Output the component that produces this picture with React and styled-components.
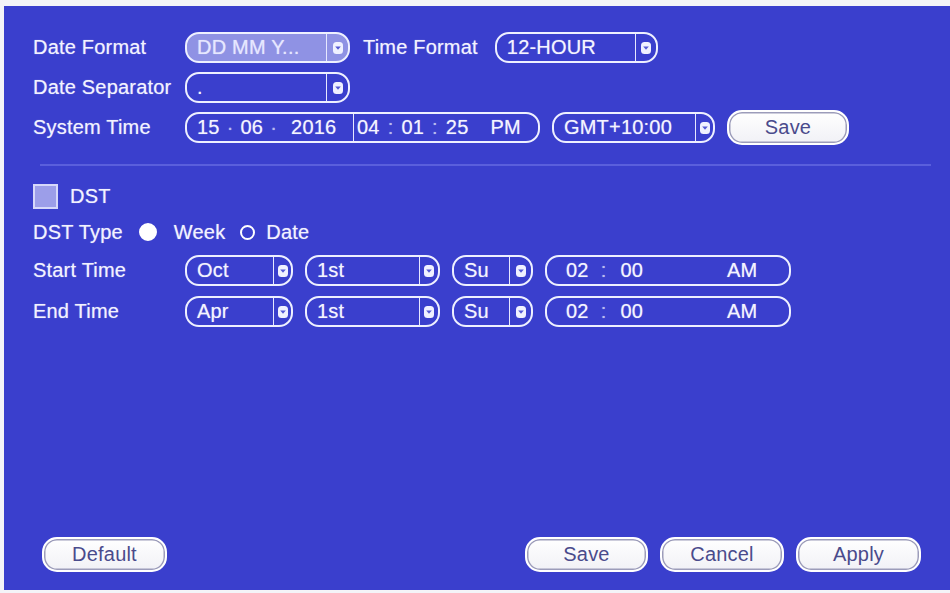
import React from "react";
import styled, { createGlobalStyle } from "styled-components";

const GlobalStyle = createGlobalStyle`
  html, body {
    margin: 0;
    padding: 0;
    background: #f4f4f8;
  }
  body {
    font-family: "Liberation Sans", Arial, sans-serif;
  }
`;

const Frame = styled.div`
  padding: 6px 0 3px 4px;
`;

const Panel = styled.div`
  height: 584px;
  box-sizing: border-box;
  background: #3a3fcd;
  padding: 26px 20px 18px 29px;
  display: flex;
  flex-direction: column;
  color: #f2f2ff;
  font-size: 20px;
  letter-spacing: 0.2px;
  text-shadow: 0 0 1px rgba(255, 255, 255, 0.55);
`;

const Row = styled.div`
  display: flex;
  align-items: center;
  height: ${({ $h }) => $h || 31}px;
  margin-bottom: ${({ $mb }) => $mb ?? 9}px;
  gap: ${({ $gap }) => $gap ?? 12}px;
`;

const Label = styled.span`
  width: 140px;
  flex-shrink: 0;
  white-space: nowrap;
`;

const InlineLabel = styled.span`
  white-space: nowrap;
  margin: 0 ${({ $mr }) => $mr ?? 0}px 0 ${({ $ml }) => $ml ?? 0}px;
`;

const Pill = styled.div`
  box-sizing: border-box;
  width: ${({ $w }) => $w}px;
  height: 31px;
  border: 2px solid #eef0ff;
  border-radius: 14px;
  display: flex;
  align-items: center;
  flex-shrink: 0;
  background: ${({ $active }) => ($active ? "#8f92e4" : "transparent")};
  color: ${({ $active }) => ($active ? "#e6e7ff" : "#f4f4ff")};
  overflow: hidden;
`;

const Value = styled.span`
  flex: 1;
  padding-left: 10px;
  white-space: nowrap;
`;

const ArrowCell = styled.span`
  width: ${({ $w }) => $w || 20}px;
  height: 100%;
  box-sizing: border-box;
  border-left: 1.5px solid #e6e8ff;
  display: flex;
  align-items: center;
  justify-content: center;
`;

const Segment = styled.span`
  display: flex;
  align-items: center;
  height: 100%;
  box-sizing: border-box;
  padding-left: ${({ $pl }) => $pl ?? 10}px;
  width: ${({ $w }) => ($w ? `${$w}px` : "auto")};
  flex: ${({ $w }) => ($w ? "none" : 1)};
  border-right: ${({ $divider }) => ($divider ? "1.5px solid #e6e8ff" : "none")};
`;

const Part = styled.span`
  margin-right: ${({ $mr }) => $mr ?? 0}px;
  color: ${({ $dim }) => ($dim ? "#b8bbf0" : "inherit")};
`;

const Button = styled.button`
  box-sizing: border-box;
  width: ${({ $w }) => $w || 124}px;
  height: 35px;
  border: 2px solid #ffffff;
  border-radius: 15px;
  background: linear-gradient(#ffffff, #f1f1f6);
  box-shadow: inset 0 0 0 1.5px #9c9cba;
  color: #4a4b8c;
  font-family: "Liberation Sans", Arial, sans-serif;
  font-size: 20px;
  letter-spacing: 0.2px;
  padding: 0;
  flex-shrink: 0;
`;

const Divider = styled.div`
  height: 2px;
  background: #5a5fdc;
  margin: 21px 0 17px 7px;
  width: 891px;
`;

const Check = styled.span`
  box-sizing: border-box;
  width: 25px;
  height: 25px;
  background: #9c9ee9;
  border: 2px solid #d6d8fa;
  margin-right: 12px;
`;

const Radio = styled.span`
  box-sizing: border-box;
  width: ${({ $on }) => ($on ? 18 : 15)}px;
  height: ${({ $on }) => ($on ? 18 : 15)}px;
  border-radius: 50%;
  border: 2px solid #ffffff;
  background: ${({ $on }) => ($on ? "#ffffff" : "transparent")};
  margin: 0 ${({ $mr }) => $mr}px 0 ${({ $ml }) => $ml}px;
`;

const Footer = styled.div`
  margin-top: auto;
  display: flex;
  align-items: center;
  padding-left: 9px;
`;

const FooterRight = styled.div`
  margin-left: auto;
  display: flex;
  gap: 12px;
  margin-right: 9px;
`;

function Arrow() {
  return (
    <svg width="10" height="12" viewBox="0 0 10 12">
      <rect x="0" y="0" width="10" height="12" rx="3.5" fill="#f0f1ff" />
      <path d="M2.2 4.6 L7.8 4.6 L5 7.8 Z" fill="#5358d4" />
    </svg>
  );
}

function Select({ width, value, active, arrow }) {
  return (
    <Pill $w={width} $active={active}>
      <Value>{value}</Value>
      <ArrowCell $w={arrow}>
        <Arrow />
      </ArrowCell>
    </Pill>
  );
}

function ClockField({ width, hh, mm, ampm }) {
  return (
    <Pill $w={width}>
      <Segment $pl={19}>
        <Part $mr={12}>{hh}</Part>
        <Part $mr={14} $dim>:</Part>
        <Part $mr={84}>{mm}</Part>
        <Part>{ampm}</Part>
      </Segment>
    </Pill>
  );
}

export default function App() {
  return (
    <Frame>
      <GlobalStyle />
      <Panel>
        <Row>
          <Label>Date Format</Label>
          <Select width={165} value="DD MM Y..." active arrow={22} />
          <InlineLabel $ml={1} $mr={5}>Time Format</InlineLabel>
          <Select width={163} value="12-HOUR" arrow={21} />
        </Row>
        <Row>
          <Label>Date Separator</Label>
          <Select width={165} value="." arrow={22} />
        </Row>
        <Row $mb={0}>
          <Label>System Time</Label>
          <Pill $w={355}>
            <Segment $w={167} $pl={10} $divider>
              <Part $mr={7}>15</Part>
              <Part $mr={7} $dim>·</Part>
              <Part $mr={7}>06</Part>
              <Part $mr={14} $dim>·</Part>
              <Part>2016</Part>
            </Segment>
            <Segment $pl={3}>
              <Part $mr={8}>04</Part>
              <Part $mr={8} $dim>:</Part>
              <Part $mr={8}>01</Part>
              <Part $mr={8} $dim>:</Part>
              <Part $mr={22}>25</Part>
              <Part>PM</Part>
            </Segment>
          </Pill>
          <Select width={163} value="GMT+10:00" arrow={18} />
          <Button $w={122}>Save</Button>
        </Row>

        <Divider />

        <Row $h={26} $mb={10} $gap={0}>
          <Check />
          <InlineLabel>DST</InlineLabel>
        </Row>
        <Row $h={26} $mb={10} $gap={0}>
          <InlineLabel>DST Type</InlineLabel>
          <Radio $on $ml={16} $mr={17} />
          <InlineLabel>Week</InlineLabel>
          <Radio $ml={15} $mr={11} />
          <InlineLabel>Date</InlineLabel>
        </Row>
        <Row $mb={10}>
          <Label>Start Time</Label>
          <Select width={108} value="Oct" arrow={18} />
          <Select width={135} value="1st" arrow={19} />
          <Select width={81} value="Su" arrow={22} />
          <ClockField width={246} hh="02" mm="00" ampm="AM" />
        </Row>
        <Row>
          <Label>End Time</Label>
          <Select width={108} value="Apr" arrow={18} />
          <Select width={135} value="1st" arrow={19} />
          <Select width={81} value="Su" arrow={22} />
          <ClockField width={246} hh="02" mm="00" ampm="AM" />
        </Row>

        <Footer>
          <Button $w={125}>Default</Button>
          <FooterRight>
            <Button $w={123}>Save</Button>
            <Button $w={124}>Cancel</Button>
            <Button $w={125}>Apply</Button>
          </FooterRight>
        </Footer>
      </Panel>
    </Frame>
  );
}
